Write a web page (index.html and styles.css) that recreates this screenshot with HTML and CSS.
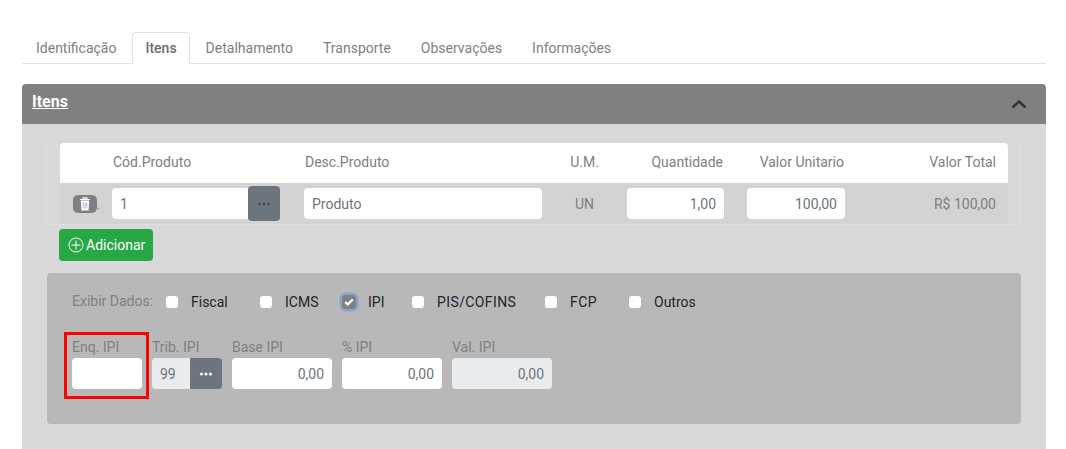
FILE: index.html
```html
<!DOCTYPE html>
<html lang="pt-BR">
<head>
    <meta charset="UTF-8">
    <meta name="viewport" content="width=device-width, initial-scale=1.0">
    <title>Itens</title>
    <link rel="stylesheet" href="styles.css">
</head>
<body>

<ul class="tabs">
    <li><a href="#">Identificação</a></li>
    <li class="active"><a href="#">Itens</a></li>
    <li><a href="#">Detalhamento</a></li>
    <li><a href="#">Transporte</a></li>
    <li><a href="#">Observações</a></li>
    <li><a href="#">Informações</a></li>
</ul>

<section class="panel">
    <div class="panel-header">
        <a href="#" class="panel-title">Itens</a>
        <svg class="chevron" width="16" height="10" viewBox="0 0 16 10">
            <path d="M1.5 8.5 L8 2.5 L14.5 8.5" fill="none" stroke="#333" stroke-width="2.4"/>
        </svg>
    </div>

    <div class="panel-body">
        <div class="items-wrap">
            <div class="items-row items-head">
                <span></span>
                <span class="head-cod">Cód.Produto</span>
                <span class="head-desc">Desc.Produto</span>
                <span class="center">U.M.</span>
                <span class="right">Quantidade</span>
                <span class="right">Valor Unitario</span>
                <span class="right">Valor Total</span>
            </div>
            <div class="items-row items-line">
                <div class="trash-cell">
                    <button class="btn-trash">
                        <svg width="12" height="14" viewBox="0 0 12 14">
                            <path d="M1 2.5 H11 M4.2 2 V0.8 H7.8 V2" fill="none" stroke="#fff" stroke-width="1.2"/>
                            <path d="M1.8 3.5 H10.2 L9.6 13.5 H2.4 Z" fill="#fff"/>
                            <path d="M4.2 5.5 V11.5 M6 5.5 V11.5 M7.8 5.5 V11.5" stroke="#c9a9d9" stroke-width="1"/>
                        </svg>
                    </button>
                    <span class="dot">.</span>
                </div>
                <div class="cod-cell">
                    <input class="field field-cod" type="text" value="1">
                    <button class="btn-more btn-more-big">
                        <svg width="14" height="4" viewBox="0 0 14 4"><circle cx="2.5" cy="2" r="1.3"/><circle cx="7" cy="2" r="1.3"/><circle cx="11.5" cy="2" r="1.3"/></svg>
                    </button>
                </div>
                <input class="field" type="text" value="Produto">
                <span class="center">UN</span>
                <input class="field right" type="text" value="1,00">
                <div class="unit-cell"><input class="field right" type="text" value="100,00"></div>
                <span class="right">R$ 100,00</span>
            </div>
        </div>

        <button class="btn-add">
            <svg width="16" height="16" viewBox="0 0 16 16">
                <circle cx="8" cy="8" r="7" fill="none" stroke="#fff" stroke-width="1"/>
                <path d="M8 3.5 V12.5 M3.5 8 H12.5" stroke="#fff" stroke-width="1"/>
            </svg>
            Adicionar
        </button>

        <div class="detail">
            <div class="show-row">
                <span class="show-label">Exibir Dados:</span>
                <div class="checks">
                    <label class="check"><span class="box"></span>Fiscal</label>
                    <label class="check"><span class="box"></span>ICMS</label>
                    <label class="check"><span class="box box-on">
                        <svg width="10" height="8" viewBox="0 0 10 8"><path d="M1.2 4 L3.8 6.4 L8.8 1.4" fill="none" stroke="#fff" stroke-width="2.2"/></svg>
                    </span>IPI</label>
                    <label class="check wide"><span class="box"></span>PIS/COFINS</label>
                    <label class="check wide"><span class="box"></span>FCP</label>
                    <label class="check"><span class="box"></span>Outros</label>
                </div>
            </div>

            <div class="fields">
                <div class="group group-enq">
                    <label>Enq. IPI</label>
                    <input class="field" type="text">
                    <div class="highlight"></div>
                </div>
                <div class="group">
                    <label>Trib. IPI</label>
                    <div class="trib">
                        <input class="field field-trib" type="text" value="99" readonly>
                        <button class="btn-more btn-more-small">
                            <svg width="14" height="4" viewBox="0 0 14 4"><circle cx="2.5" cy="2" r="1.6"/><circle cx="7" cy="2" r="1.6"/><circle cx="11.5" cy="2" r="1.6"/></svg>
                        </button>
                    </div>
                </div>
                <div class="group group-num">
                    <label>Base IPI</label>
                    <input class="field right" type="text" value="0,00">
                </div>
                <div class="group group-num">
                    <label>% IPI</label>
                    <input class="field right" type="text" value="0,00">
                </div>
                <div class="group group-num">
                    <label>Val. IPI</label>
                    <input class="field right field-off" type="text" value="0,00" readonly>
                </div>
            </div>
        </div>
    </div>
</section>

</body>
</html>
```

FILE: styles.css
```css
html, body { height: 449px; overflow: hidden; }
body { margin: 0; padding: 32px 20px 0 22px; background: #fff; font-family: Roboto, Arial, sans-serif; font-size: 14px; color: #808080; box-sizing: border-box; }
button { font-family: inherit; border: 0; padding: 0; cursor: pointer; }

/* tabs */
.tabs { list-style: none; margin: 0; padding: 0; display: flex; height: 32px; box-sizing: border-box; border-bottom: 1px solid #dee2e6; }
.tabs li { height: 32px; }
.tabs a { display: block; height: 32px; box-sizing: border-box; line-height: 30px; padding: 0 14px; border: 1px solid transparent; border-bottom: 0; border-radius: 4px 4px 0 0; color: #808080; text-decoration: none; }
.tabs li:first-child a { padding-left: 13px; padding-right: 15px; }
.tabs .active a { background: #fff; border-color: #dee2e6; color: #6c6c6c; font-weight: 500; padding: 0 12px; }
.tabs .active + li a { padding-left: 15px; }

/* panel */
.panel { margin-top: 20px; }
.panel-header { height: 40px; background: #808080; border-radius: 4px 4px 0 0; display: flex; align-items: flex-start; justify-content: space-between; padding: 8px 19px 0 10px; box-sizing: border-box; }
.panel-title { color: #fff; font-size: 16px; font-weight: 700; text-decoration: underline; }
.chevron { margin-top: 7px; }
.panel-body { background: #d9d9d9; height: 325px; box-sizing: border-box; padding: 19px 25px 0 24px; }

/* items table */
.items-wrap { padding: 0 12px 0 13px; height: 82px; border: 1px solid #e0e0e0; border-top: 0; border-radius: 4px; box-sizing: border-box; }
.items-row { display: grid; grid-template-columns: 52px 192px 238px 85px 97px 121px 1fr; align-items: center; padding-right: 12px; }
.items-head { height: 40px; background: #fff; border-radius: 4px 4px 0 0; padding-bottom: 2px; box-sizing: border-box; }
.items-head .right { padding-right: 1px; }
.items-head .right:last-child { padding-right: 0; }
.head-cod { padding-left: 1px; }
.head-desc { padding-left: 1px; }
.items-line { height: 41px; background: #d3d3d3; border-radius: 0 0 4px 4px; padding-top: 1px; padding-bottom: 1px; box-sizing: border-box; }
.center { text-align: center; }
.right { text-align: right; }
.trash-cell { display: flex; align-items: center; padding-left: 13px; }
.btn-trash { width: 24px; height: 18px; background: #808080; border-radius: 5px; display: flex; align-items: center; justify-content: center; }
.dot { font-size: 12px; line-height: 12px; margin-top: 2px; color: #6c757d; }
.cod-cell { display: flex; align-items: center; padding-right: 24px; }
.field { display: block; width: 100%; height: 31px; box-sizing: border-box; border: 0; border-radius: 4px; background: #fff; padding: 0 8px; font-family: inherit; font-size: 14px; color: #6c757d; }
.field-cod { flex: 1; min-width: 0; border-radius: 4px 0 0 4px; }
.btn-more { background: #6c757d; border-radius: 4px; display: flex; align-items: center; justify-content: center; flex: none; }
.btn-more-big { width: 32px; height: 35px; fill: #41464c; }
.btn-more-small { width: 32px; height: 31px; fill: #fff; border-radius: 0 4px 4px 0; }
.unit-cell { padding-left: 23px; }

.btn-add { display: flex; align-items: center; gap: 2px; width: 94px; height: 32px; margin: 4px 0 0 13px; padding-left: 9px; background: #28a745; border-radius: 4px; color: #fff; font-size: 14px; font-weight: 400; }

/* detail box */
.detail { margin: 12px 0 0 1px; height: 151px; background: #b8b8b8; border-radius: 4px; padding: 19px 25px 0 25px; box-sizing: border-box; }
.show-row { display: flex; align-items: center; height: 20px; }
.show-label { width: 94px; color: #808080; margin-top: -2px; }
.checks { display: grid; grid-template-columns: 94px 82px 70px 133px 84px auto; }
.check { display: flex; align-items: center; gap: 13px; color: #212529; }
.wide { letter-spacing: 0.4px; }
.box { width: 12px; height: 12px; background: #fff; border-radius: 3px; display: flex; align-items: center; justify-content: center; }
.box-on { width: 14px; height: 14px; background: #808080; border-radius: 4px; box-shadow: 0 0 0 2.5px #84a5cf; margin-right: -1px; }

.fields { display: flex; gap: 10px; margin-top: 26px; }
.group { width: 70px; position: relative; }
.group label { display: block; height: 20px; line-height: 19px; color: #808080; }
.group-num { width: 100px; }
.trib { display: flex; }
.field-trib { width: 38px; background: #e9ecef; border-radius: 4px 0 0 4px; }
.field-off { background: #e9ecef; }
.highlight { position: absolute; left: -8px; top: -6px; width: 85px; height: 67px; border: 3px solid #f00; box-sizing: border-box; }
```
